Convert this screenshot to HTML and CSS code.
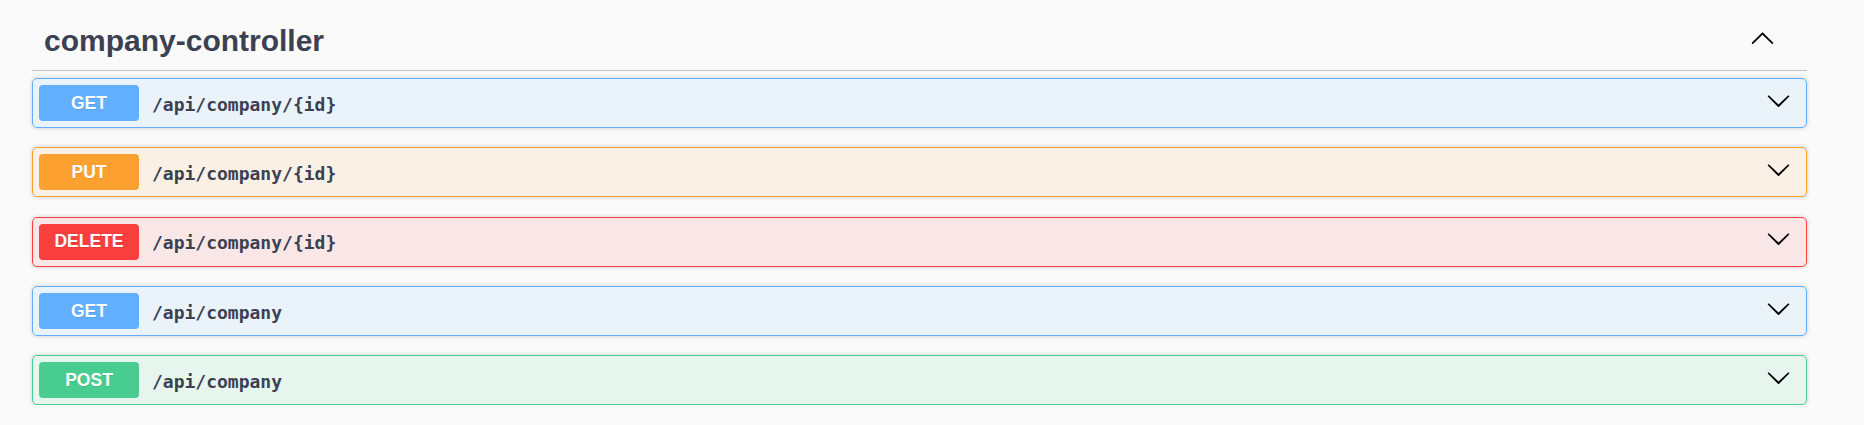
FILE: index.html
```html
<!DOCTYPE html>
<html lang="en">
<head>
<meta charset="utf-8">
<title>company-controller</title>
<link rel="stylesheet" href="styles.css">
</head>
<body>
<div class="wrapper">
  <section class="tag-section">
    <h3 class="tag">
      <span class="tag-name">company-controller</span>
      <svg class="arrow arrow-up" viewBox="0 0 20 20" width="25" height="25" aria-hidden="true"><path d="M17.418 14.908c.272.268.709.268.979 0s.271-.701 0-.969l-7.908-7.83c-.27-.268-.707-.268-.979 0l-7.908 7.83c-.27.268-.27.701 0 .969.271.268.709.268.979 0L10 7.767l7.418 7.141z"/></svg>
    </h3>
    <div class="ops">
      <div class="opblock get">
        <span class="method">GET</span>
        <span class="path">/api/company/{id}</span>
        <svg class="arrow arrow-down" viewBox="0 0 20 20" width="25" height="25" aria-hidden="true"><path d="M17.418 6.109c.272-.268.709-.268.979 0s.271.701 0 .969l-7.908 7.83c-.27.268-.707.268-.979 0l-7.908-7.83c-.27-.268-.27-.701 0-.969.271-.268.709-.268.979 0L10 13.25l7.418-7.141z"/></svg>
      </div>
      <div class="opblock put">
        <span class="method">PUT</span>
        <span class="path">/api/company/{id}</span>
        <svg class="arrow arrow-down" viewBox="0 0 20 20" width="25" height="25" aria-hidden="true"><path d="M17.418 6.109c.272-.268.709-.268.979 0s.271.701 0 .969l-7.908 7.83c-.27.268-.707.268-.979 0l-7.908-7.83c-.27-.268-.27-.701 0-.969.271-.268.709-.268.979 0L10 13.25l7.418-7.141z"/></svg>
      </div>
      <div class="opblock delete">
        <span class="method">DELETE</span>
        <span class="path">/api/company/{id}</span>
        <svg class="arrow arrow-down" viewBox="0 0 20 20" width="25" height="25" aria-hidden="true"><path d="M17.418 6.109c.272-.268.709-.268.979 0s.271.701 0 .969l-7.908 7.83c-.27.268-.707.268-.979 0l-7.908-7.83c-.27-.268-.27-.701 0-.969.271-.268.709-.268.979 0L10 13.25l7.418-7.141z"/></svg>
      </div>
      <div class="opblock get">
        <span class="method">GET</span>
        <span class="path">/api/company</span>
        <svg class="arrow arrow-down" viewBox="0 0 20 20" width="25" height="25" aria-hidden="true"><path d="M17.418 6.109c.272-.268.709-.268.979 0s.271.701 0 .969l-7.908 7.83c-.27.268-.707.268-.979 0l-7.908-7.83c-.27-.268-.27-.701 0-.969.271-.268.709-.268.979 0L10 13.25l7.418-7.141z"/></svg>
      </div>
      <div class="opblock post">
        <span class="method">POST</span>
        <span class="path">/api/company</span>
        <svg class="arrow arrow-down" viewBox="0 0 20 20" width="25" height="25" aria-hidden="true"><path d="M17.418 6.109c.272-.268.709-.268.979 0s.271.701 0 .969l-7.908 7.83c-.27.268-.707.268-.979 0l-7.908-7.83c-.27-.268-.27-.701 0-.969.271-.268.709-.268.979 0L10 13.25l7.418-7.141z"/></svg>
      </div>
    </div>
  </section>
</div>
</body>
</html>
```

FILE: styles.css
```css
html, body {
  margin: 0;
  padding: 0;
  background: #fafafa;
}

body {
  font-family: "Liberation Sans", Arial, sans-serif;
  color: #3b4151;
}

.wrapper {
  padding: 11px 57px 0 32px;
}

.tag {
  display: flex;
  align-items: flex-start;
  margin: 0 0 7px 0;
  padding: 12px 32px 12px 12px;
  border-bottom: 1px solid rgba(59, 65, 81, 0.3);
  font-size: 30px;
  line-height: 35px;
  font-weight: bold;
  color: #3b4151;
}

.tag-name {
  flex: 1;
}

.arrow {
  flex: none;
  fill: #000;
}

.arrow-up {
  margin-top: 1.6px;
}

.ops {
  display: flex;
  flex-direction: column;
  gap: 19.35px;
}

.opblock {
  display: flex;
  align-items: center;
  height: 50px;
  box-sizing: border-box;
  padding: 6px;
  border: 1px solid #000;
  border-radius: 5px;
  box-shadow: 0 0 4px rgba(0, 0, 0, 0.19);
}

.method {
  flex: none;
  width: 100px;
  height: 36px;
  display: flex;
  align-items: center;
  justify-content: center;
  border-radius: 4px;
  color: #fff;
  font-family: "Liberation Sans", Arial, sans-serif;
  font-size: 17.5px;
  font-weight: bold;
  text-shadow: 0 1px 0 rgba(0, 0, 0, 0.1);
}

.path {
  flex: 1;
  padding: 2px 13px 0 13px;
  font-family: "DejaVu Sans Mono", "Liberation Mono", monospace;
  font-size: 18px;
  font-weight: bold;
  color: #3b4151;
}

.arrow-down {
  align-self: flex-start;
  margin-top: 2.6px;
  margin-right: 9px;
}

.get {
  background: rgba(97, 175, 254, 0.1);
  border-color: #61affe;
}
.get .method { background: #61affe; }

.put {
  background: rgba(252, 161, 48, 0.1);
  border-color: #fca130;
}
.put .method { background: #fca130; }

.delete {
  background: rgba(249, 62, 62, 0.1);
  border-color: #f93e3e;
}
.delete .method { background: #f93e3e; }

.post {
  background: rgba(73, 204, 144, 0.1);
  border-color: #49cc90;
}
.post .method { background: #49cc90; }
```
